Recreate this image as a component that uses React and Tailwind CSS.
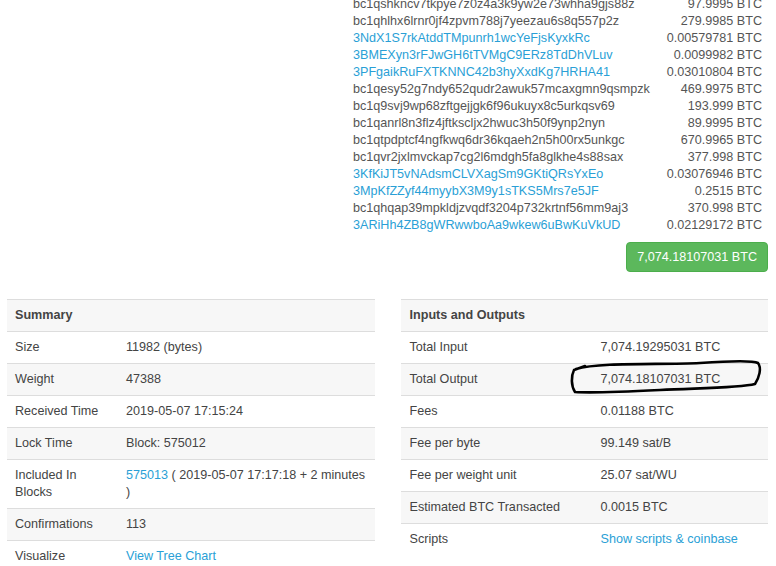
import React from 'react';

const outputs = [
  ['bc1qshkncv7tkpye7z0z4a3k9yw2e73whha9gjs88z', '97.9995 BTC', false],
  ['bc1qhlhx6lrnr0jf4zpvm788j7yeezau6s8q557p2z', '279.9985 BTC', false],
  ['3NdX1S7rkAtddTMpunrh1wcYeFjsKyxkRc', '0.00579781 BTC', true],
  ['3BMEXyn3rFJwGH6tTVMgC9ERz8TdDhVLuv', '0.0099982 BTC', true],
  ['3PFgaikRuFXTKNNC42b3hyXxdKg7HRHA41', '0.03010804 BTC', true],
  ['bc1qesy52g7ndy652qudr2awuk57mcaxgmn9qsmpzk', '469.9975 BTC', false],
  ['bc1q9svj9wp68zftgejjgk6f96ukuyx8c5urkqsv69', '193.999 BTC', false],
  ['bc1qanrl8n3flz4jftkscljx2hwuc3h50f9ynp2nyn', '89.9995 BTC', false],
  ['bc1qtpdptcf4ngfkwq6dr36kqaeh2n5h00rx5unkgc', '670.9965 BTC', false],
  ['bc1qvr2jxlmvckap7cg2l6mdgh5fa8glkhe4s88sax', '377.998 BTC', false],
  ['3KfKiJT5vNAdsmCLVXagSm9GKtiQRsYxEo', '0.03076946 BTC', true],
  ['3MpKfZZyf44myybX3M9y1sTKS5Mrs7e5JF', '0.2515 BTC', true],
  ['bc1qhqap39mpkldjzvqdf3204p732krtnf56mm9aj3', '370.998 BTC', false],
  ['3ARiHh4ZB8gWRwwboAa9wkew6uBwKuVkUD', '0.02129172 BTC', true],
];

function Row({ label, children, striped }) {
  return (
    <tr className={`border-t border-[#dddddd] ${striped ? 'bg-[#f7f7f7]' : 'bg-white'}`}>
      {label}
      {children}
    </tr>
  );
}

export default function App() {
  const link = 'text-[#2a9fd6]';

  const summary = [
    ['Size', '11982 (bytes)'],
    ['Weight', '47388'],
    ['Received Time', '2019-05-07 17:15:24'],
    ['Lock Time', 'Block: 575012'],
    [<>Included In<br />Blocks</>, <><span className={link}>575013</span> ( 2019-05-07 17:17:18 + 2 minutes<br />)</>],
    ['Confirmations', '113'],
    ['Visualize', <span className={link}>View Tree Chart</span>],
  ];

  const io = [
    ['Total Input', '7,074.19295031 BTC'],
    ['Total Output', '7,074.18107031 BTC'],
    ['Fees', '0.01188 BTC'],
    ['Fee per byte', '99.149 sat/B'],
    ['Fee per weight unit', '25.07 sat/WU'],
    ['Estimated BTC Transacted', '0.0015 BTC'],
    ['Scripts', <span className={link}>Show scripts &amp; coinbase</span>],
  ];

  return (
    <div className="relative w-[776px] h-[566px] overflow-hidden bg-white text-[12.6px] text-[#444] font-['Liberation_Sans',Arial,sans-serif]">
      {/* output list */}
      <div className="flex flex-col items-end pl-[353px] pr-[8px]">
        <div className="w-full -mt-[4px] pr-[6px] text-[#555]">
          {outputs.map(([addr, amt, isLink]) => (
            <div key={addr} className="flex justify-between h-[17px] leading-[17px]">
              <span className={isLink ? link : ''}>{addr}</span>
              <span>{amt}</span>
            </div>
          ))}
        </div>
        <div className="mt-[8px] h-[30px] px-[10px] flex items-center rounded-[4px] bg-[#5cb85c] border border-[#4cae4c] text-white">
          7,074.18107031 BTC
        </div>
      </div>

      {/* tables */}
      <div className="grid grid-cols-2 items-start gap-[26px] pl-[7px] pr-[8px] mt-[27px]">
        <table className="w-full border-collapse">
          <tbody>
            <tr className="border-t border-[#dddddd] bg-[#f7f7f7]">
              <th colSpan={2} className="text-left font-bold px-[8px] py-[7px] leading-[17px] text-[#444]">Summary</th>
            </tr>
            {summary.map(([k, v], i) => (
              <Row key={i} striped={i % 2 === 1}
                label={<td className="w-[119px] px-[8px] py-[7px] leading-[17px] align-top">{k}</td>}>
                <td className="py-[7px] leading-[17px] align-top">{v}</td>
              </Row>
            ))}
          </tbody>
        </table>
        <table className="w-full border-collapse">
          <tbody>
            <tr className="border-t border-[#dddddd] bg-[#f7f7f7]">
              <th colSpan={2} className="text-left font-bold px-[9px] py-[7px] leading-[17px] text-[#444]">Inputs and Outputs</th>
            </tr>
            {io.map(([k, v], i) => (
              <Row key={i} striped={i % 2 === 1}
                label={<td className="w-[200px] px-[9px] py-[7px] leading-[17px] align-top">{k}</td>}>
                <td className="py-[7px] leading-[17px] align-top">{v}</td>
              </Row>
            ))}
          </tbody>
        </table>
      </div>

      {/* hand-drawn circle around total output */}
      <svg className="absolute left-0 top-0 pointer-events-none" width="776" height="566">
        <path
          d="M576 369 C 600 362, 660 365, 700 363 C 730 361, 752 360, 758 363 C 762 368, 759 378, 755 384 C 740 388, 700 388, 660 390 C 620 392, 590 393, 575 392 C 571 386, 571 376, 574 370 L 585 366"
          fill="none" stroke="#000" strokeWidth="2.6" strokeLinecap="round" strokeLinejoin="round"
        />
      </svg>
    </div>
  );
}
